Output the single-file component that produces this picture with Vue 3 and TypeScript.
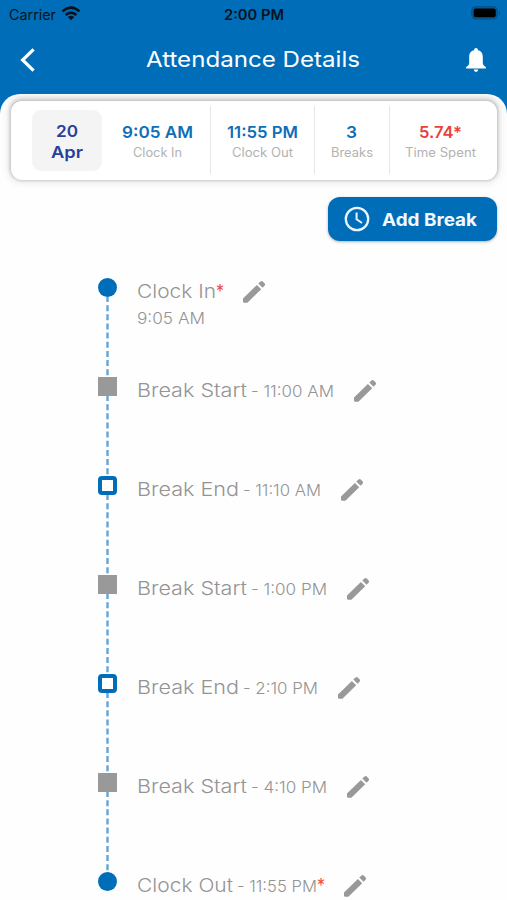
<script setup lang="ts">
import { h } from 'vue'

interface FitProps {
  text: string
  width: number
}

// Single line of text that fills a known width, baseline 20px below its top.
const FitText = (props: FitProps) =>
  h('svg', { width: props.width, height: 26, overflow: 'visible' }, [
    h(
      'text',
      { x: 0, y: 20, textLength: props.width, lengthAdjust: 'spacingAndGlyphs', fill: 'currentColor' },
      props.text,
    ),
  ])
FitText.props = ['text', 'width']

interface Stat {
  id: string
  value: string
  valueWidth: number
  label: string
  labelWidth: number
}

interface Entry {
  kind: 'punch' | 'start' | 'end'
  label: string
  labelWidth: number
  time: string
  timeWidth: number
  stacked?: boolean
  required?: boolean
}

const stats: Stat[] = [
  { id: 'in', value: '9:05 AM', valueWidth: 71, label: 'Clock In', labelWidth: 49 },
  { id: 'out', value: '11:55 PM', valueWidth: 71, label: 'Clock Out', labelWidth: 61 },
  { id: 'breaks', value: '3', valueWidth: 11, label: 'Breaks', labelWidth: 42 },
  { id: 'spent', value: '5.74*', valueWidth: 43, label: 'Time Spent', labelWidth: 71 },
]

const entries: Entry[] = [
  { kind: 'punch', label: 'Clock In', labelWidth: 79, time: '9:05 AM', timeWidth: 68, stacked: true, required: true },
  { kind: 'start', label: 'Break Start', labelWidth: 110, time: '- 11:00 AM', timeWidth: 83 },
  { kind: 'end', label: 'Break End', labelWidth: 102, time: '- 11:10 AM', timeWidth: 78 },
  { kind: 'start', label: 'Break Start', labelWidth: 110, time: '- 1:00 PM', timeWidth: 76 },
  { kind: 'end', label: 'Break End', labelWidth: 102, time: '- 2:10 PM', timeWidth: 75 },
  { kind: 'start', label: 'Break Start', labelWidth: 110, time: '- 4:10 PM', timeWidth: 76 },
  { kind: 'punch', label: 'Clock Out', labelWidth: 96, time: '- 11:55 PM', timeWidth: 80, required: true },
]
</script>

<template>
  <div class="screen">
    <header class="header">
      <div class="status">
        <div class="carrier">
          <FitText text="Carrier" :width="47" />
          <svg class="wifi" width="20" height="15" viewBox="0 0 20 15">
            <g fill="none" stroke="#07121c" stroke-width="2.6">
              <path d="M1.5 5.4Q10-2.3 18.5 5.4" />
              <path d="M4.6 8.9Q10 4.3 15.4 8.9" />
            </g>
            <path d="M6.8 11Q10 8.4 13.2 11L10 14.3Z" fill="#07121c" />
          </svg>
        </div>
        <FitText class="clock" text="2:00 PM" :width="60" />
        <svg class="battery" width="30" height="14" viewBox="0 0 30 14">
          <rect x=".7" y=".7" width="25.6" height="12.3" rx="3.8" fill="#005a9d" stroke="#075080" />
          <rect x="2.7" y="2.5" width="22" height="8.8" rx="2" fill="#000" />
          <path d="M28 4.8q2 2 0 4Z" fill="#075080" />
        </svg>
      </div>
      <div class="bar">
        <svg class="back" width="18" height="26" viewBox="0 0 18 26">
          <path d="M14.6 2.3L3.6 13L14.6 23.7" fill="none" stroke="#fff" stroke-width="3.2" />
        </svg>
        <FitText class="title" text="Attendance Details" :width="214" />
        <svg class="bell" width="20" height="24" viewBox="0 0 20 24">
          <path
            d="M8.2 2.2V1.6a1.8 1.6 0 0 1 3.6 0v.6c3.5.7 5 3.3 5 6.8v5.7c0 2 1.3 3.5 3.1 4.2v1.5H.1v-1.5c1.8-.7 3.1-2.2 3.1-4.2V9c0-3.5 1.5-6.1 5-6.8ZM7.8 21.5h4.4c-.2 1.5-1 2.3-2.2 2.3s-2-.8-2.2-2.3Z"
            fill="#fff"
          />
        </svg>
      </div>
    </header>

    <main class="sheet">
      <section class="card">
        <div class="date">
          <FitText text="20" :width="22" />
          <FitText text="Apr" :width="32" />
        </div>
        <div v-for="s in stats" :key="s.id" class="stat" :class="s.id">
          <FitText class="value" :text="s.value" :width="s.valueWidth" />
          <FitText class="label" :text="s.label" :width="s.labelWidth" />
        </div>
      </section>

      <button class="add">
        <svg width="26" height="26" viewBox="0 0 26 26">
          <g fill="none" stroke="#e9f5ff">
            <circle cx="13" cy="13" r="11.2" stroke-width="2.3" />
            <path d="M12.6 6.5V13.3L18 17" stroke-width="2" />
          </g>
        </svg>
        <FitText text="Add Break" :width="95" />
      </button>

      <ol class="timeline">
        <li v-for="(e, i) in entries" :key="i" class="entry">
          <div class="rail">
            <i class="marker" :class="e.kind"></i>
            <svg v-if="i < entries.length - 1" class="dash" width="3" height="80" viewBox="0 0 3 80">
              <path d="M1.5 0V80" stroke="#62a5d8" stroke-width="2.4" stroke-dasharray="6 3.15" stroke-dashoffset="1" />
            </svg>
          </div>
          <div class="body" :class="{ stacked: e.stacked }">
            <FitText class="name" :text="e.label" :width="e.labelWidth" />
            <FitText class="time" :text="e.time" :width="e.timeWidth" />
          </div>
          <FitText v-if="e.required" class="star" text="*" :width="8" />
          <svg class="pencil" width="24" height="24" viewBox="0 0 24 24">
            <path
              d="M1 18.5L14.9 4.9L19.2 9.2L5.4 22.8H2.2Q1 22.8 1 21.5ZM16.3 3.6L18.5 1.5Q19.7.6 20.8 1.6L22.7 3.5Q23.6 4.6 22.6 5.7L20.5 7.8Z"
              fill="#999"
            />
          </svg>
        </li>
      </ol>
    </main>
  </div>
</template>

<style>
body {
  margin: 0;
  background: #fefefe;
}
</style>

<style scoped>
.screen {
  box-sizing: border-box;
  width: 507px;
  height: 900px;
  overflow: hidden;
  background: linear-gradient(#006db8 120px, #fefefe 120px);
  font-family: Inter, "Open Sans", sans-serif;
}
svg {
  display: block;
  flex: none;
}
.header {
  height: 94px;
  color: #fff;
}
.status {
  display: grid;
  grid-template-columns: 1fr auto 1fr;
  align-items: start;
  height: 34px;
  padding: 0 6px 0 9px;
  color: #07121c;
  font-size: 14.5px;
}
.carrier {
  display: flex;
  gap: 5px;
}
.wifi {
  margin-top: 6px;
}
.clock {
  font-weight: 600;
  margin-left: -3px;
}
.battery {
  margin-top: 6px;
  justify-self: end;
}
.bar {
  display: flex;
  justify-content: space-between;
  align-items: flex-start;
  height: 60px;
  padding: 13px 21px 0 19px;
}
.title {
  font-size: 21.5px;
  font-weight: 400;
  margin-left: 2px;
}
.bell {
  margin-top: 1px;
}
.sheet {
  box-sizing: border-box;
  height: 806px;
  padding: 7px 10px 0 11px;
  border-radius: 20px 20px 0 0;
  background: #fefefe;
  overflow: hidden;
}
.card {
  box-sizing: border-box;
  display: flex;
  height: 79px;
  padding: 5px 0 6px 21px;
  border-radius: 11px;
  background: #fff;
  box-shadow:
    0 0 3px 1px rgba(0, 0, 0, 0.14),
    0 0 8px 3px rgba(0, 0, 0, 0.08),
    0 -3px 4px 2px rgba(0, 0, 0, 0.07);
}
.date {
  box-sizing: border-box;
  display: flex;
  flex-direction: column;
  align-items: center;
  width: 70px;
  height: 61px;
  margin-top: 4px;
  padding-top: 7px;
  border-radius: 9px;
  background: #f4f4f4;
  color: #28419a;
  font-size: 16.5px;
  font-weight: 600;
}
.date svg + svg {
  margin-top: -5px;
}
.stat {
  box-sizing: border-box;
  display: flex;
  flex-direction: column;
  align-items: center;
  padding: 12px 1px 0 0;
  border-left: 1px solid #e6e6e6;
}
.stat.in {
  width: 108px;
  padding-left: 4px;
  border-left: 0;
}
.stat.out {
  width: 104px;
}
.stat.breaks {
  width: 75px;
}
.stat.spent {
  width: 103px;
}
.value {
  color: #0e6fb8;
  font-size: 16.5px;
  font-weight: 600;
}
.spent .value {
  color: #e9423b;
}
.label {
  margin-top: -7px;
  color: #b2b2b2;
  font-size: 12.5px;
  font-weight: 400;
}
.add {
  box-sizing: border-box;
  display: flex;
  align-items: center;
  width: 169px;
  height: 44px;
  margin: 17px 0 0 auto;
  padding: 0 16px;
  gap: 12px;
  border: 0;
  border-radius: 12px;
  background: #006db8;
  box-shadow: 0 1px 3px rgba(0, 0, 0, 0.3);
  color: #f2faff;
  font: 700 17.5px Inter, sans-serif;
}
.timeline {
  margin: 37px 0 0;
  padding: 0 0 0 87px;
  list-style: none;
}
.entry {
  display: flex;
  height: 99px;
}
.rail {
  display: flex;
  flex-direction: column;
  align-items: center;
  width: 19px;
  margin-right: 19.5px;
}
.marker {
  box-sizing: border-box;
  flex: none;
  width: 19px;
  height: 19px;
}
.marker.punch {
  border-radius: 50%;
  background: #006db8;
}
.marker.start {
  background: #999;
}
.marker.end {
  border: 4px solid #006db8;
  border-radius: 4px;
  background: #fff;
}
.body {
  display: flex;
  gap: 4px;
  color: #949494;
}
.body.stacked {
  flex-direction: column;
  gap: 0;
  width: 79px;
}
.name {
  font-size: 18.8px;
  font-weight: 300;
}
.time {
  font-size: 16.5px;
  font-weight: 300;
}
.star {
  margin-right: -1px;
  color: #f04a42;
  font-size: 18px;
}
.pencil {
  margin: 2px 0 0 19.5px;
}
</style>
